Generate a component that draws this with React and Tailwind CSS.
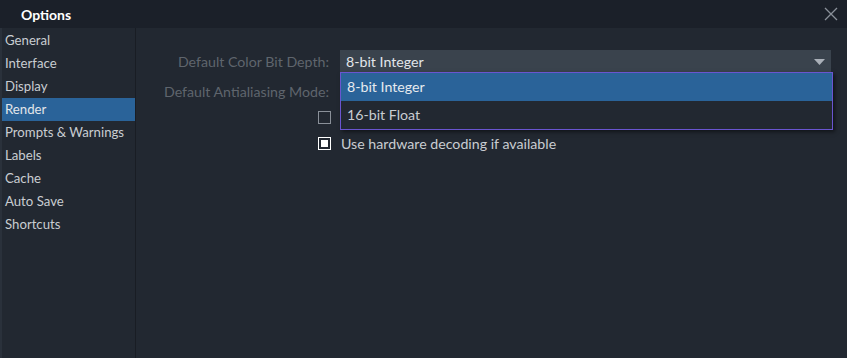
import { useState } from 'react';

const sections = ['General', 'Interface', 'Display', 'Render', 'Prompts & Warnings', 'Labels', 'Cache', 'Auto Save', 'Shortcuts'];

export default function App() {
  const [active, setActive] = useState('Render');

  return (
    <div
      className="w-[847px] h-[358px] flex flex-col bg-[#222831] text-[13px] text-[#c9cdd2] overflow-hidden"
      style={{ fontFamily: 'Lato, "Open Sans", sans-serif' }}
    >
      {/* 标题栏 */}
      <div className="h-[28px] shrink-0 flex items-center justify-between bg-[#1b2029] pl-[21px] pr-[9px]">
        <span className="text-[14px] font-bold text-white">Options</span>
        <svg width="14" height="14" viewBox="0 0 14 14" className="text-[#8a9099]">
          <path d="M1 1L13 13M13 1L1 13" stroke="currentColor" strokeWidth="1.3" />
        </svg>
      </div>

      <div className="flex flex-1 min-h-0">
        {/* 侧边栏 */}
        <div className="w-[136px] shrink-0 border-l-2 border-[#2a313b] border-r border-r-[#191d24] pt-[1px] text-[13.2px]">
          {sections.map((s) => (
            <div
              key={s}
              onClick={() => setActive(s)}
              className={`h-[23px] flex items-center pl-[3px] ${active === s ? 'bg-[#2a6399] text-[#e2e6ea]' : ''}`}
            >
              {s}
            </div>
          ))}
        </div>

        {/* 内容 */}
        <div className="flex-1 relative pt-[22px] text-[14.2px]">
          <div className="flex items-center h-[23px]">
            <div className="w-[193px] text-right text-[#5f656d] whitespace-nowrap">Default Color Bit Depth:</div>
            <div className="ml-[11px] w-[491px] h-[23px] bg-[#3a434d] flex items-center justify-between pl-[6px] pr-[6px] text-[#e2e6ea]">
              <span>8-bit Integer</span>
              <svg width="11" height="6" viewBox="0 0 11 6">
                <path d="M0 0H11L5.5 6Z" fill="#aab0b8" />
              </svg>
            </div>
          </div>
          <div className="flex items-center h-[23px] mt-[7px]">
            <div className="w-[193px] text-right text-[#5f656d] whitespace-nowrap">Default Antialiasing Mode:</div>
          </div>
          <div className="flex items-center h-[23px] mt-[3px] pl-[182px]">
            <div className="w-[13px] h-[13px] border border-[#8a9099]" />
          </div>
          <div className="flex items-center h-[23px] mt-[3px] pl-[182px]">
            <div className="w-[13px] h-[13px] border border-white flex items-center justify-center">
              <div className="w-[7px] h-[7px] bg-white" />
            </div>
            <span className="ml-[10px]">Use hardware decoding if available</span>
          </div>

          {/* 下拉菜单 */}
          <div className="absolute left-[204px] top-[44px] w-[493px] border border-[#6a55d0] bg-[#222831] shadow-[2px_2px_4px_rgba(0,0,0,0.5)]">
            <div className="h-[28px] flex items-center pl-[6px] bg-[#2a6399] text-[#e6eaee]">8-bit Integer</div>
            <div className="h-[28px] flex items-center pl-[6px]">16-bit Float</div>
          </div>
        </div>
      </div>
    </div>
  );
}
